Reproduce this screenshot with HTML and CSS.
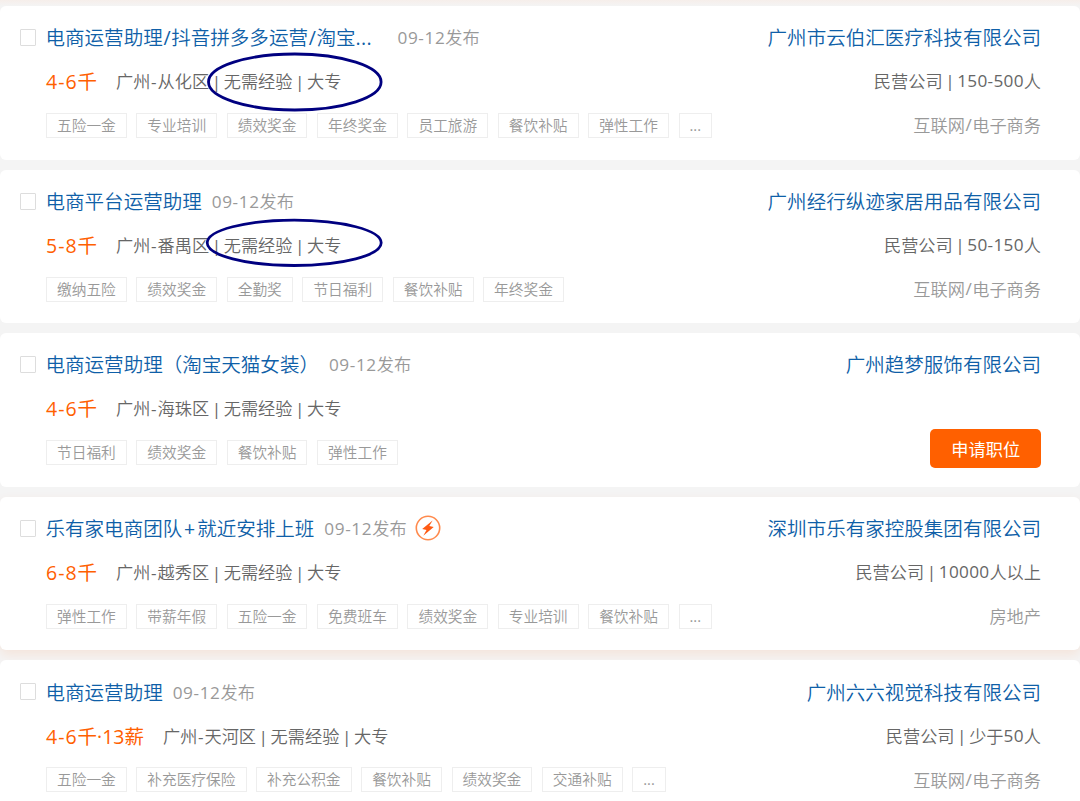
FILE: index.html
```html
<!DOCTYPE html>
<html lang="zh-CN">
  <head>
    <meta charset="UTF-8" />
    <meta name="viewport" content="width=device-width, initial-scale=1.0" />
    <title>电商运营助理</title>
    <link rel="stylesheet" href="styles.css">
  </head>
  <body>
    <div class="job-list">
      <div class="job">
        <span class="check"></span>
        <div class="info">
          <div class="row">
            <a class="title title-cut">电商运营助理<i>/</i>抖音拼多多运营<i>/</i>淘宝<b>...</b></a>
            <span class="date"><b>09-12</b>发布</span>
          </div>
          <div class="row">
            <span class="salary"><b>4-6</b>千</span>
            <span class="meta">广州<b class="dash">-</b>从化区<i>|</i>无需经验<i>|</i>大专</span>
          </div>
          <div class="row tags">
            <span>五险一金</span><span>专业培训</span><span>绩效奖金</span><span>年终奖金</span><span>员工旅游</span><span>餐饮补贴</span><span>弹性工作</span><span><b>...</b></span>
          </div>
        </div>
        <div class="company">
          <a class="row title">广州市云伯汇医疗科技有限公司</a>
          <div class="row meta">民营公司<i>|</i><b>150-500</b>人</div>
          <div class="row trade">互联网<b>/</b>电子商务</div>
        </div>
      </div>

      <div class="job">
        <span class="check"></span>
        <div class="info">
          <div class="row">
            <a class="title">电商平台运营助理</a>
            <span class="date"><b>09-12</b>发布</span>
          </div>
          <div class="row">
            <span class="salary"><b>5-8</b>千</span>
            <span class="meta">广州<b class="dash">-</b>番禺区<i>|</i>无需经验<i>|</i>大专</span>
          </div>
          <div class="row tags">
            <span>缴纳五险</span><span>绩效奖金</span><span>全勤奖</span><span>节日福利</span><span>餐饮补贴</span><span>年终奖金</span>
          </div>
        </div>
        <div class="company">
          <a class="row title">广州经行纵迹家居用品有限公司</a>
          <div class="row meta">民营公司<i>|</i><b>50-150</b>人</div>
          <div class="row trade">互联网<b>/</b>电子商务</div>
        </div>
      </div>

      <div class="job">
        <span class="check"></span>
        <div class="info">
          <div class="row">
            <a class="title">电商运营助理（淘宝天猫女装）</a>
            <span class="date"><b>09-12</b>发布</span>
          </div>
          <div class="row">
            <span class="salary"><b>4-6</b>千</span>
            <span class="meta">广州<b class="dash">-</b>海珠区<i>|</i>无需经验<i>|</i>大专</span>
          </div>
          <div class="row tags">
            <span>节日福利</span><span>绩效奖金</span><span>餐饮补贴</span><span>弹性工作</span>
          </div>
        </div>
        <div class="company">
          <a class="row title">广州趋梦服饰有限公司</a>
          <button class="apply">申请职位</button>
        </div>
      </div>

      <div class="job active">
        <span class="check"></span>
        <div class="info">
          <div class="row">
            <a class="title">乐有家电商团队<i class="plus">+</i>就近安排上班</a>
            <span class="date"><b>09-12</b>发布</span>
            <svg class="flash" viewBox="0 0 26 26">
              <circle cx="13" cy="13" r="11.7" fill="none" stroke="#ff8a4d" stroke-width="1.6" />
              <path d="M17.6 5.4 7.2 14.1l4.3.8-3.2 5.9 10.4-8.9-4.4-.8z" fill="#ff5a14" />
            </svg>
          </div>
          <div class="row">
            <span class="salary"><b>6-8</b>千</span>
            <span class="meta">广州<b class="dash">-</b>越秀区<i>|</i>无需经验<i>|</i>大专</span>
          </div>
          <div class="row tags">
            <span>弹性工作</span><span>带薪年假</span><span>五险一金</span><span>免费班车</span><span>绩效奖金</span><span>专业培训</span><span>餐饮补贴</span><span><b>...</b></span>
          </div>
        </div>
        <div class="company">
          <a class="row title">深圳市乐有家控股集团有限公司</a>
          <div class="row meta">民营公司<i>|</i><b>10000</b>人以上</div>
          <div class="row trade">房地产</div>
        </div>
      </div>

      <div class="job">
        <span class="check"></span>
        <div class="info">
          <div class="row">
            <a class="title">电商运营助理</a>
            <span class="date"><b>09-12</b>发布</span>
          </div>
          <div class="row">
            <span class="salary"><b>4-6</b>千·13薪</span>
            <span class="meta">广州<b class="dash">-</b>天河区<i>|</i>无需经验<i>|</i>大专</span>
          </div>
          <div class="row tags">
            <span>五险一金</span><span>补充医疗保险</span><span>补充公积金</span><span>餐饮补贴</span><span>绩效奖金</span><span>交通补贴</span><span><b>...</b></span>
          </div>
        </div>
        <div class="company">
          <a class="row title">广州六六视觉科技有限公司</a>
          <div class="row meta">民营公司<i>|</i>少于<b>50</b>人</div>
          <div class="row trade">互联网<b>/</b>电子商务</div>
        </div>
      </div>
    </div>

    <!-- hand-drawn circles over the requirements -->
    <svg class="marks" viewBox="0 0 1080 801">
      <ellipse cx="294.8" cy="82" rx="86.3" ry="28" />
      <ellipse cx="294.2" cy="242.8" rx="87" ry="22.7" />
    </svg>
  </body>
</html>
```

FILE: styles.css
```css
* {
  margin: 0;
  padding: 0;
  box-sizing: border-box;
}

body {
  font-family: "Open Sans", "Noto Sans CJK SC", sans-serif;
  font-weight: 350;
  background: #f4f4f4;
  position: relative;
  height: 801px;
  overflow: hidden;
}

i,
b {
  font-style: normal;
  font-weight: 400;
}

.job-list {
  display: flex;
  flex-direction: column;
  gap: 10px;
  padding-top: 6px;
  background: linear-gradient(#f6eeea, #f4f4f4 6px);
}

.job {
  position: relative;
  display: flex;
  flex-shrink: 0;
  height: 153.6px;
  padding: 8.8px 39px 0 20px;
  background: #fff;
  border-radius: 6px;
}

.job.active {
  box-shadow: 0 5px 12px rgba(255, 96, 0, 0.1);
}

.check {
  width: 16px;
  height: 17px;
  margin-top: 14.2px;
  border: 1px solid #ddd;
  border-radius: 1px;
}

.info {
  flex: 1;
  margin-left: 10px;
}

.row {
  display: flex;
  align-items: center;
  height: 44px;
  white-space: nowrap;
}

.title {
  font-size: 19.55px;
  color: #0f5fa8;
}

.info .title {
  margin-left: -0.5px;
}

.title i {
  margin: 0 0.7px;
}

.title b {
  letter-spacing: 0.4px;
}

.title .plus {
  margin: 0 1.9px;
}

.title-cut {
  width: 342px;
}

.date {
  margin-left: 10px;
  font-size: 17.2px;
  color: #999;
}

.date b {
  letter-spacing: 0.6px;
}

.meta b {
  letter-spacing: 0.3px;
}

.meta .dash {
  margin: 0 0.6px;
}

.flash {
  width: 26px;
  height: 26px;
  margin-left: 8.5px;
}

.salary {
  margin-right: 19px;
  font-size: 19.5px;
  font-weight: 400;
  color: #ff6000;
}

.salary b {
  letter-spacing: 1px;
}

.meta {
  font-size: 17.2px;
  color: #666;
}

.meta i {
  width: 14.6px;
  display: inline-block;
  text-align: center;
}

.tags {
  gap: 9.6px;
}

.tags span {
  height: 25px;
  margin-top: 1.6px;
  padding: 0 10px;
  border: 1px solid #eee;
  font-size: 14.7px;
  line-height: 22px;
  color: #999;
}

.company {
  display: flex;
  flex-direction: column;
  align-items: flex-end;
}

.trade {
  font-size: 17.2px;
  color: #999;
}

.trade b {
  margin: 0 0.5px;
}

.apply {
  width: 110.6px;
  height: 39px;
  margin-top: 43.2px;
  border: none;
  border-radius: 5px;
  background: #ff6000;
  color: #fff;
  font: 400 17.2px "Open Sans", "Noto Sans CJK SC", sans-serif;
}

.marks {
  position: absolute;
  top: 0;
  left: 0;
  width: 1080px;
  height: 801px;
  fill: none;
  stroke: #000080;
  stroke-width: 2.8;
  pointer-events: none;
}
```
